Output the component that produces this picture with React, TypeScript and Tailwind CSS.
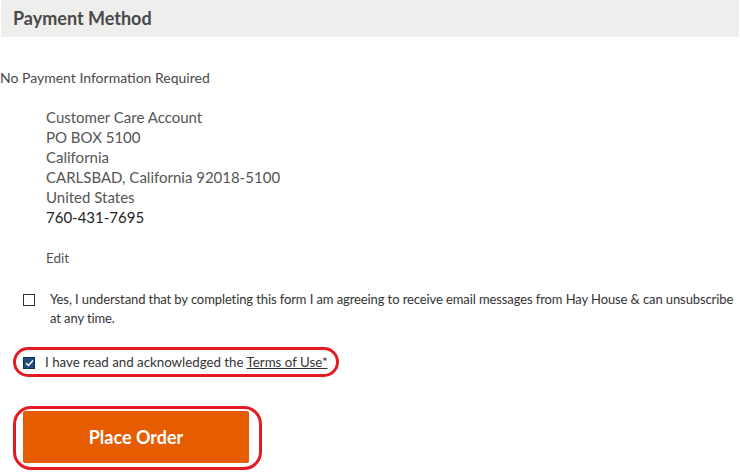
import React from "react";

export default function App() {
  return (
    <div className="w-[740px] h-[472px] bg-white font-['Lato','Open_Sans',sans-serif] text-[#444] overflow-hidden">
      <div className="ml-px w-[738px] h-[37px] bg-[#eeeeec] flex items-center pl-[12px]">
        <h2 className="text-[18px] font-bold text-[#4a4a4a] leading-none -mt-px">Payment Method</h2>
      </div>

      <p className="mt-[31px] text-[14px] leading-[20px] text-[#4a4a4a]">No Payment Information Required</p>

      <div className="mt-[19px] pl-[46px] text-[15px] leading-[20px] text-[#555]">
        <div>Customer Care Account</div>
        <div>PO BOX 5100</div>
        <div>California</div>
        <div>CARLSBAD, California 92018-5100</div>
        <div>United States</div>
        <div className="text-[#222]">760-431-7695</div>
      </div>

      <div className="mt-[21px] pl-[46px] text-[13.5px] leading-[20px] text-[#555]">Edit</div>

      <div className="mt-[22px] pl-[23px] flex items-start text-[13px] tracking-[-0.1px] leading-[19px] text-[#333]">
        <span className="mt-[4px] w-[12px] h-[12px] border border-[#333] bg-white shrink-0"></span>
        <span className="ml-[15px] whitespace-nowrap">
          Yes, I understand that by completing this form I am agreeing to receive email messages from Hay House &amp; can unsubscribe
          <br />
          at any time.
        </span>
      </div>

      <div className="mt-[19px] ml-[13px] inline-flex items-center border-[3px] border-[#e41b23] rounded-full h-[30px] pl-[7px] pr-[8px] text-[13.3px] text-[#333]">
        <span className="mt-px w-[12px] h-[12px] bg-[#1e4f80] border border-[#0f2f52] flex items-center justify-center shrink-0">
          <svg width="9" height="8" viewBox="0 0 9 8">
            <path d="M1 4.2 L3.4 6.4 L8 1.4" stroke="#fff" strokeWidth="1.5" fill="none" />
          </svg>
        </span>
        <span className="ml-[10px] mt-px">
          I have read and acknowledged the <span className="underline">Terms of Use*</span>
        </span>
      </div>

      <div className="mt-[29px] ml-[13px] w-[249px] h-[64px] border-[3px] border-[#e41b23] rounded-[18px] pl-[7px] pr-[10px] pt-[2px] pb-[4px]">
        <button className="w-full h-full bg-[#e65c00] rounded-[2px] text-white font-bold text-[18px]">
          Place Order
        </button>
      </div>
    </div>
  );
}
